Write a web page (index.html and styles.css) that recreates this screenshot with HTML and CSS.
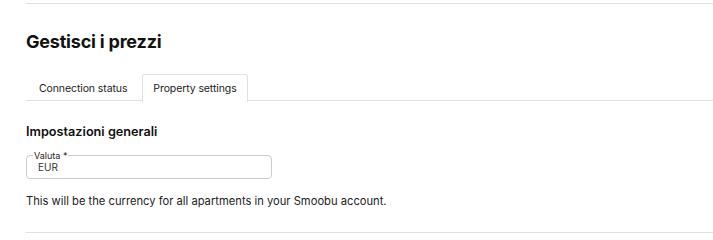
FILE: index.html
```html
<!DOCTYPE html>
<html lang="it">
<head>
<meta charset="utf-8">
<link rel="stylesheet" href="styles.css">
</head>
<body>
<div class="page">
  <div class="rule"></div>
  <h1 class="title">Gestisci i prezzi</h1>
  <div class="tabs">
    <div class="tab">Connection status</div>
    <div class="tab active">Property settings</div>
  </div>
  <h2 class="section">Impostazioni generali</h2>
  <fieldset class="field">
    <legend class="legend">Valuta *</legend>
    <div class="value">EUR</div>
  </fieldset>
  <p class="help">This will be the currency for all apartments in your Smoobu account.</p>
  <div class="rule bottom"></div>
</div>
</body>
</html>
```
FILE: styles.css
```css
* { box-sizing: border-box; }
html, body { margin: 0; padding: 0; background: #fff; }
body {
  font-family: Inter, "Noto Sans", "Liberation Sans", sans-serif;
  color: #1d1f22;
}
.page {
  padding: 3px 0 0 26px;
}
.rule {
  height: 1px;
  background: #dde1e5;
}
.title {
  margin: 27px 0 0 0;
  font-size: 18px;
  line-height: 22px;
  font-weight: 700;
  color: #111;
  letter-spacing: -0.2px;
}
.tabs {
  display: flex;
  gap: 2px;
  margin-top: 21px;
  border-bottom: 1px solid #dde1e5;
  height: 27px;
}
.tab {
  padding: 0 12px;
  height: 27px;
  font-size: 10.5px;
  line-height: 27px;
  color: #222;
  border: 1px solid transparent;
  border-bottom: none;
  border-radius: 3px 3px 0 0;
  letter-spacing: -0.1px;
}
.tab.active {
  border-color: #dde1e5;
  background: #fff;
  height: 28px;
  margin-bottom: -1px;
  padding: 0 10px;
}
.section {
  margin: 23px 0 0 0;
  font-size: 12.7px;
  line-height: 16px;
  font-weight: 600;
  color: #111;
}
.field {
  margin: 11px 0 0 0;
  width: 246px;
  height: 28px;
  border: 1px solid #c9cdd2;
  border-radius: 4px;
  padding: 0 0 0 11px;
  position: relative;
}
.legend {
  font-size: 9px;
  line-height: 9px;
  padding: 0 1px;
  margin-left: -5px;
  color: #222;
}
.value {
  font-size: 10px;
  line-height: 12px;
  color: #333;
  margin-top: 1px;
}
.help {
  margin: 15px 0 0 0;
  font-size: 11.2px;
  line-height: 14px;
  color: #222;
}
.bottom {
  margin-top: 24px;
}
```
